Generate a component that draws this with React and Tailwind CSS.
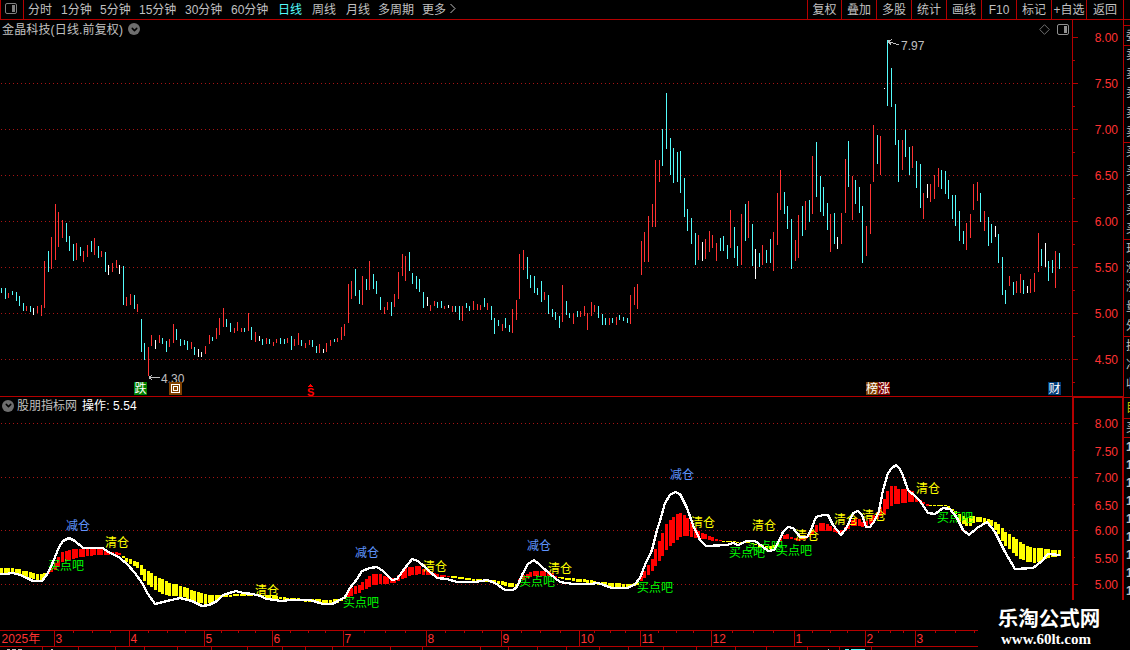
import { ChevronDown } from 'lucide-react';

const RED = '#b40000';
const COLORS = { r: '#ff3232', c: '#54fcfc', w: '#ffffff' };

// x, high, low, color
const candles = `
1 288 293 c|5 288 299 c|8 293 298 r|12 291 295 c|16 292 301 c|19 296 306 c|23 303 311 c|26 306 311 r|30 306 312 c|33 308 315 w
37 306 313 r|41 305 316 r|44 261 308 r|48 251 272 c|51 237 269 r|55 204 260 r|58 212 247 r|62 220 238 r|66 223 242 c|69 236 251 c
73 244 261 c|76 243 260 r|80 247 256 c|83 251 262 r|87 245 257 r|91 241 252 c|94 238 255 r|98 246 258 c|101 251 257 r|105 252 272 c
108 265 275 w|112 263 272 r|116 260 268 r|119 265 274 w|123 266 305 c|126 297 306 r|130 294 305 r|134 295 309 c|137 304 312 r
141 319 352 c|144 343 360 c|148 347 376 r|151 335 346 r|155 340 349 w|159 335 343 r|162 338 344 c|166 341 352 c|169 339 347 r
173 324 343 r|176 329 340 c|180 339 346 c|184 340 345 c|187 341 350 c|191 342 349 r|194 347 355 c|198 349 357 w|201 352 357 w
205 346 354 r|209 335 344 r|212 337 341 c|216 328 339 r|219 318 335 r|223 308 327 r|226 319 327 c|230 323 332 c|234 328 333 r
237 322 331 r|241 328 332 r|244 328 332 c|248 313 331 r|251 327 340 c|255 332 342 r|259 336 341 w|262 339 345 c|266 338 344 r
269 339 344 c|273 342 346 r|276 339 343 r|280 338 344 c|284 339 344 c|287 338 343 r|291 336 350 c|294 339 346 r|298 333 345 r
301 340 346 c|305 343 348 r|309 340 345 r|312 340 347 c|316 346 353 c|319 344 353 r|323 349 353 w|326 343 352 r|330 340 346 r
334 339 342 c|337 338 342 r|341 327 340 r|344 324 336 r|348 284 323 r|351 281 299 r|355 269 296 c|359 290 304 c|362 276 305 r
366 279 290 c|369 261 290 r|373 274 289 c|376 281 294 c|380 297 310 c|384 307 314 r|387 302 310 r|391 302 316 c|394 294 307 r
398 272 299 r|402 254 276 r|405 256 281 r|409 252 271 c|412 273 284 c|416 276 289 c|419 279 292 c|423 292 308 c|427 297 306 w
430 305 311 r|434 301 306 r|437 302 308 c|441 301 308 c|444 306 309 r|448 305 308 w|452 306 312 r|455 306 312 c|459 306 320 c
462 306 321 r|466 303 308 c|469 306 311 c|473 301 310 r|477 304 310 r|480 305 310 r|484 298 307 c|487 303 310 r|491 306 320 c
494 318 334 c|498 320 326 c|502 324 331 r|505 318 328 c|509 325 332 c|512 309 333 r|516 300 320 r|519 254 299 r|523 250 270 r
527 257 279 c|530 275 288 c|534 276 293 c|537 288 295 c|541 281 302 c|544 292 300 r|548 295 314 c|552 309 317 c|555 312 320 c
559 316 328 c|562 285 322 r|566 301 315 c|569 313 318 c|573 313 324 r|577 311 317 c|580 311 317 r|584 306 316 r|587 313 330 r
591 302 316 r|594 305 312 r|598 306 318 c|602 314 325 c|605 318 325 c|609 318 325 r|612 318 323 c|616 317 325 r|619 315 320 c
623 317 321 c|627 318 323 c|630 295 324 r|634 287 305 r|637 284 309 r|641 241 275 r|644 232 262 r|648 216 262 r|652 204 227 r
655 160 227 r|659 160 182 r|662 129 166 c|666 93 149 c|670 138 175 c|673 148 183 c|677 152 182 c|680 151 193 c|684 178 217 c
687 209 231 c|691 218 244 c|695 233 265 c|698 235 260 r|702 242 261 w|705 239 259 r|709 231 252 r|712 235 248 r|716 243 261 r
720 238 251 c|723 236 251 c|727 245 259 c|730 210 248 r|734 227 258 c|737 246 266 c|741 214 265 r|745 204 241 c|748 201 238 r
752 224 266 c|755 249 279 w|759 253 267 c|762 245 265 r|766 250 263 c|770 239 263 c|773 232 271 r|777 193 245 r|780 170 210 r
784 192 214 c|787 206 229 c|791 219 269 c|795 240 261 r|798 215 258 r|802 206 236 c|805 201 230 r|809 200 222 c|812 156 214 r
816 142 197 c|820 176 212 c|823 187 216 c|827 203 230 c|830 214 252 r|834 213 244 c|837 237 249 w|841 213 244 r|845 159 213 r
848 141 187 c|852 176 220 r|855 180 204 c|859 187 213 c|862 206 263 c|866 226 256 r|870 184 234 r|873 125 182 r|877 135 164 c
880 136 175 r|884 88 89 w|887 40 106 c|891 68 107 c|895 104 145 c|898 140 182 c|902 140 170 r|905 130 157 c|909 147 175 c
912 146 168 r|916 161 188 c|920 164 208 c|923 193 219 r|927 184 198 w|930 184 202 r|934 175 199 r|938 168 187 r|941 170 189 c
945 171 194 c|948 180 199 c|952 195 219 c|955 195 226 c|959 211 241 c|963 231 244 c|966 223 250 r|970 214 238 r|973 184 210 r
977 182 201 r|980 193 222 c|984 211 231 r|988 217 246 c|991 224 243 c|995 226 237 w|998 234 263 c|1002 257 295 c|1005 290 304 c
1009 276 286 r|1013 282 295 c|1016 281 293 r|1020 274 293 r|1023 280 294 c|1027 286 293 w|1030 279 293 r|1034 273 292 r
1038 233 272 r|1041 249 266 c|1045 243 267 w|1048 261 281 c|1052 260 273 c|1055 251 288 r|1059 253 269 c`
  .trim()
  .split(/[|\n]/)
  .map((s) => {
    const [x, hi, lo, c] = s.split(' ');
    return { x: +x, hi: +hi, lo: +lo, c };
  });

// band between the two averages: x, top, bottom
const bands = [
  ['y', [[1, 568, 574], [12, 568, 573], [19, 569, 574], [23, 571, 577], [30, 572, 578], [37, 574, 580], [41, 574, 580], [44, 573, 577]]],
  ['r', [[48, 572, 574], [51, 568, 572], [55, 563, 570], [58, 557, 567], [62, 552, 562], [69, 550, 560], [76, 549, 558], [87, 549, 556], [98, 548, 555], [105, 549, 555], [108, 551, 555], [119, 553, 555]]],
  ['y', [[123, 556, 558], [126, 558, 562], [130, 559, 564], [134, 561, 566], [137, 562, 568], [141, 565, 575], [144, 569, 581], [148, 571, 585], [155, 576, 590], [162, 579, 594], [169, 583, 596], [176, 584, 596], [184, 587, 597], [191, 590, 601], [198, 592, 603], [205, 594, 604], [212, 595, 602], [219, 595, 598], [226, 595, 597], [240, 594, 596], [255, 594, 596], [266, 595, 598], [273, 596, 599], [290, 598, 600], [330, 600, 604], [337, 599, 603], [344, 597, 599]]],
  ['r', [[348, 590, 597], [351, 588, 596], [355, 586, 594], [359, 585, 593], [362, 582, 590], [366, 579, 589], [369, 576, 587], [373, 574, 585], [380, 574, 584], [387, 577, 584], [394, 578, 583], [398, 575, 581], [402, 571, 579], [405, 568, 578], [409, 567, 576], [419, 566, 574], [423, 569, 575], [430, 571, 575], [437, 574, 577], [444, 575, 577], [448, 576, 577]]],
  ['y', [[452, 576, 578], [462, 577, 579], [473, 579, 581], [484, 579, 582], [494, 580, 583], [501, 581, 585], [509, 583, 587], [516, 584, 588]]],
  ['r', [[519, 579, 583], [523, 575, 580], [527, 574, 578], [530, 572, 577], [534, 571, 576], [548, 571, 576], [552, 573, 576], [555, 576, 578]]],
  ['y', [[559, 577, 578], [566, 578, 580], [573, 578, 581], [580, 579, 582], [590, 580, 583], [600, 582, 585], [616, 583, 587], [627, 584, 587], [637, 583, 585]]],
  ['r', [[641, 576, 581], [644, 571, 578], [648, 565, 575], [652, 559, 571], [655, 549, 566], [659, 541, 561], [662, 533, 556], [666, 524, 550], [670, 520, 546], [673, 517, 543], [677, 514, 540], [680, 513, 537], [684, 515, 536], [687, 518, 536], [691, 522, 537], [695, 528, 538], [698, 531, 538], [702, 533, 539], [709, 536, 540], [712, 537, 541], [716, 539, 541], [720, 540, 541]]],
  ['y', [[723, 541, 542], [748, 542, 543], [755, 544, 545], [759, 545, 548], [770, 546, 549], [777, 544, 547]]],
  ['r', [[780, 537, 542], [784, 535, 539], [787, 534, 539], [791, 537, 539], [798, 539, 541], [805, 538, 539], [809, 533, 537], [812, 530, 534], [816, 525, 532], [820, 523, 531], [827, 524, 531], [830, 526, 531], [837, 530, 533], [841, 530, 533], [845, 527, 531], [852, 520, 526], [855, 518, 526], [859, 519, 526], [863, 523, 527], [870, 518, 524], [877, 512, 519], [880, 507, 516], [884, 499, 514], [887, 491, 509], [891, 486, 506], [895, 486, 504], [898, 489, 504], [905, 489, 503], [912, 491, 502], [916, 497, 502], [920, 500, 503], [927, 504, 506]]],
  ['y', [[930, 505, 506], [945, 505, 506], [948, 506, 508], [955, 511, 514], [959, 514, 522], [966, 518, 526], [970, 516, 526], [973, 516, 523], [980, 517, 522], [988, 519, 523], [995, 522, 530], [998, 524, 534], [1002, 528, 541], [1005, 532, 546], [1009, 534, 549], [1013, 537, 553], [1016, 539, 556], [1020, 542, 559], [1023, 544, 560], [1027, 546, 562], [1034, 548, 563], [1041, 548, 561], [1048, 549, 558], [1055, 550, 557], [1059, 550, 556]]],
];

const lerp = (pts, x) => {
  const i = pts.findIndex((p) => p[0] >= x);
  if (i <= 0) return pts[0].slice(1);
  const [a, b] = [pts[i - 1], pts[i]];
  const t = (x - a[0]) / (b[0] - a[0]);
  return [Math.round(a[1] + (b[1] - a[1]) * t), Math.round(a[2] + (b[2] - a[2]) * t)];
};

const bandBars = candles.flatMap(({ x }) => {
  const band = bands.find(([, pts]) => x >= pts[0][0] && x <= pts[pts.length - 1][0]);
  if (!band) return [];
  const [top, bottom] = lerp(band[1], x);
  return [{ x, top, bottom, fill: band[0] === 'y' ? '#ffff00' : '#ff0000' }];
});

const signalLine =
  '0,574 5,574 13,573 20,575 27,578 33,581 42,581 48,573 53,562 59,547 63,541 69,538 75,541 83,548 103,548 108,552 115,555 120,558 127,564 135,573 142,583 148,594 155,604 167,601 180,598 192,601 202,606 209,605 217,601 223,595 236,591 243,593 253,594 260,596 267,599 282,601 290,600 310,600 323,604 332,604 338,601 345,597 350,588 357,579 362,571 370,568 377,567 383,571 392,580 397,579 405,568 412,559 418,561 427,569 437,578 447,579 457,582 475,582 487,580 495,583 505,590 513,590 517,587 522,575 528,564 534,560 540,565 550,574 560,582 573,584 590,584 598,583 612,588 628,588 635,584 640,578 645,565 652,550 657,530 660,521 665,503 670,495 675,492 680,494 687,508 693,525 700,540 706,546 727,545 733,543 738,545 747,541 755,541 762,546 768,551 774,550 778,543 783,532 788,527 793,528 800,537 807,537 811,530 816,517 823,515 828,515 833,525 841,535 847,527 853,513 858,511 862,515 866,527 870,527 875,520 879,511 883,490 888,473 892,468 896,465 899,468 902,473 908,490 915,496 920,501 928,513 935,514 943,508 950,509 957,518 963,530 969,535 977,528 987,522 995,532 1005,552 1015,569 1033,568 1042,561 1048,554 1060,555';

const SELL = '#ffff00';
const BUY = '#00ff00';
const TRIM = '#5f95ff';
const notes = [
  [66, 525, '减仓', TRIM], [355, 552, '减仓', TRIM], [527, 545, '减仓', TRIM], [670, 474, '减仓', TRIM],
  [105, 542, '清仓', SELL], [255, 590, '清仓', SELL], [423, 566, '清仓', SELL], [548, 568, '清仓', SELL],
  [691, 522, '清仓', SELL], [752, 525, '清仓', SELL], [795, 535, '清仓', SELL], [834, 519, '清仓', SELL],
  [862, 515, '清仓', SELL], [916, 488, '清仓', SELL],
  [48, 565, '买点吧', BUY], [343, 602, '买点吧', BUY], [519, 581, '买点吧', BUY], [637, 587, '买点吧', BUY],
  [729, 552, '买点吧', BUY], [747, 546, '买点吧', BUY], [776, 550, '买点吧', BUY], [937, 517, '买点吧', BUY],
];

const priceScale = [[37, '8.00'], [83, '7.50'], [129, '7.00'], [175, '6.50'], [221, '6.00'], [267, '5.50'], [313, '5.00'], [359, '4.50']];
const indicatorScale = [[423, '8.00'], [451, '7.50'], [477, '7.00'], [505, '6.50'], [530, '6.00'], [558, '5.50'], [584, '5.00']];
const months = [[54, '3'], [129, '4'], [204, '5'], [272, '6'], [343, '7'], [426, '8'], [501, '9'], [579, '10'], [640, '11'], [711, '12'], [794, '1'], [865, '2'], [915, '3']];
const weekTicks = [73, 92, 110, 148, 167, 185, 221, 238, 255, 290, 308, 325, 364, 385, 405, 445, 464, 482, 521, 540, 560, 594, 610, 625, 658, 676, 693, 732, 753, 773, 812, 830, 847, 878, 890, 903, 935, 955, 974];
const lowerTicks = [42, 78, 115, 144, 177, 211, 247, 282, 305, 332, 390, 422, 480, 508, 537, 566, 599, 628, 663, 696, 735, 766, 807, 839, 871];

function PanelIcon({ className }) {
  return (
    <svg className={className} width="13" height="11" viewBox="0 0 13 11" fill="none">
      <rect x=".5" y=".5" width="11" height="10" rx="1.5" stroke="currentColor" />
      <rect x="7" y="2" width="3" height="7" fill="currentColor" />
    </svg>
  );
}

function RoundToggle() {
  return (
    <span className="flex h-3 w-3 items-center justify-center rounded-full bg-[#6e6e6e]">
      <ChevronDown size={9} strokeWidth={4} className="text-black" />
    </span>
  );
}

function GridLine({ y }) {
  return <line x1="1" x2="1071" y1={y + 0.5} y2={y + 0.5} stroke="#a81414" strokeDasharray="1 3" shapeRendering="auto" />;
}

function Toolbar() {
  return (
    <div className="flex h-5 shrink-0 border-b border-[#b40000] text-[#c0c0c0]">
      <div className="flex w-6 shrink-0 items-start border-x border-[#b40000] pt-[3px] pl-1">
        <PanelIcon className="text-[#808080]" />
      </div>
      <div className="flex flex-1 leading-5 whitespace-nowrap">
        <span className="w-[33px] pl-1">分时</span>
        <span className="w-[39px] pl-1">1分钟</span>
        <span className="w-[39px] pl-1">5分钟</span>
        <span className="w-[46px] pl-1">15分钟</span>
        <span className="w-[46px] pl-1">30分钟</span>
        <span className="w-[47px] pl-1">60分钟</span>
        <span className="w-[34px] pl-1 text-[#54fcfc]">日线</span>
        <span className="w-[34px] pl-1">周线</span>
        <span className="w-8 pl-1">月线</span>
        <span className="w-11 pl-1">多周期</span>
        <span className="pl-1">更多</span>
        <svg className="mt-[3px] ml-[3px]" width="8" height="11" viewBox="0 0 8 11">
          <path d="M1.5 1l4.5 4.5L1.5 10" fill="none" stroke="currentColor" />
        </svg>
      </div>
      <div className="flex h-[19px] leading-5 whitespace-nowrap text-center *:border-l *:border-[#b40000]">
        <span className="w-[34px]">复权</span>
        <span className="w-[35px]">叠加</span>
        <span className="w-[35px]">多股</span>
        <span className="w-[35px]">统计</span>
        <span className="w-[35px]">画线</span>
        <span className="w-[35px]">F10</span>
        <span className="w-[35px]">标记</span>
        <span className="w-[35px]">+自选</span>
        <span className="w-[37px]">返回</span>
        <span className="w-[7px]" />
      </div>
    </div>
  );
}

function PricePanel() {
  return (
    <section className="flex h-[376px] shrink-0">
      <div className="w-[1072px]">
        <header className="flex h-[18px] items-center pr-[2px] pl-[2px] text-[#c0c0c0]">
          <h1 className="w-[126px] pt-px tracking-[0.15px] whitespace-nowrap">金晶科技(日线.前复权)</h1>
          <RoundToggle />
          <svg className="mr-[7px] ml-auto" width="11" height="11" viewBox="0 0 11 11">
            <path d="M5.5.7l4.8 4.8-4.8 4.8L.7 5.5z" fill="none" stroke="#707070" />
          </svg>
          <PanelIcon className="text-[#909090]" />
        </header>
        <svg className="block" width="1072" height="358" viewBox="0 38 1072 358" shapeRendering="crispEdges">
          {priceScale.slice(1).map(([y]) => <GridLine key={y} y={y} />)}
          {candles.map(({ x, hi, lo, c }) => (
            <rect key={x} x={x} y={hi} width="1" height={lo - hi} fill={COLORS[c]} />
          ))}
          {/* high / low callouts */}
          <g stroke="#c0c0c0" fill="none">
            <path d="M888 41.5l11 3.5M888 41l4-1.5M888 41l3 4" />
            <path d="M149 377.5h11M149 377.5l3.5-3M149 377.5l3.5 3" />
          </g>
          <text x="901" y="50" fill="#c0c0c0">7.97</text>
          <text x="161" y="383" fill="#c0c0c0">4.30</text>
          {/* event markers */}
          <rect x="134" y="382" width="13" height="13" fill="#008000" />
          <text x="134.5" y="393" fill="#fff">跌</text>
          <rect x="169" y="382" width="13" height="13" fill="#804000" />
          <path d="M171.5 384.5h8v8h-8zM173.5 386.5h4v4h-4z" fill="none" stroke="#fff" />
          <path d="M308 386.5h5M309 385.5h3M310 384.5h1" stroke="#f00" fill="none" />
          <text x="307" y="395.5" fontSize="11" fontWeight="700" fill="#f00">S</text>
          <rect x="866" y="382" width="12" height="13" fill="#804000" />
          <rect x="878" y="382" width="12" height="13" fill="#800000" />
          <text x="866" y="393" fill="#fff">榜涨</text>
          <rect x="1048" y="382" width="13" height="13" fill="#003c78" />
          <text x="1048.5" y="393" fill="#fff">财</text>
        </svg>
      </div>
      <svg className="block" width="51" height="376" viewBox="1072 20 51 376" shapeRendering="crispEdges">
        <rect x="1072" y="20" width="1" height="376" fill={RED} />
        {priceScale.map(([y, label]) => (
          <g key={label}>
            <rect x="1073" y={y} width="5" height="1" fill={RED} />
            <rect x="1073" y={y + 23} width="2" height="1" fill={RED} />
            <text x="1118" y={y + 5} textAnchor="end" fill="#ff3232">{label}</text>
          </g>
        ))}
      </svg>
    </section>
  );
}

function IndicatorPanel() {
  return (
    <section className="flex h-[234px] shrink-0 border-t border-[#b40000]">
      <div className="w-[1072px]">
        <header className="flex h-[17px] items-center pl-[2px] text-[#c0c0c0]">
          <RoundToggle />
          <h2 className="ml-[3px]">股朋指标网</h2>
          <span className="ml-[5px] tracking-[0.1px] text-white">操作: 5.54</span>
        </header>
        <svg className="block" width="1072" height="216" viewBox="0 414 1072 216" shapeRendering="crispEdges">
          {indicatorScale.filter((_, i) => i % 2 === 0).map(([y]) => <GridLine key={y} y={y} />)}
          {bandBars.map(({ x, top, bottom, fill }) => (
            <rect key={x} x={x - 1} y={top} width="3" height={Math.max(1, bottom - top)} fill={fill} />
          ))}
          {notes.map(([x, y, label, fill]) => (
            <text key={x} x={x} y={y + 4.5} fill={fill}>{label}</text>
          ))}
          <polyline points={signalLine} fill="none" stroke="#fff" strokeWidth="2.3" strokeLinejoin="round" />
        </svg>
      </div>
      <svg className="block" width="51" height="233" viewBox="1072 397 51 233" shapeRendering="crispEdges">
        <path d="M1073 630V397h50" fill="none" stroke={RED} strokeWidth="2" />
        <rect x="1122" y="397" width="1" height="233" fill={RED} />
        {indicatorScale.map(([y, label], i) => (
          <g key={label}>
            <rect x="1073" y={y - (i % 2)} width={i % 2 ? 2 : 5} height="1" fill={RED} />
            <text x="1118" y={y + 5} textAnchor="end" fill="#ff3232">{label}</text>
          </g>
        ))}
      </svg>
    </section>
  );
}

function TimeScale() {
  return (
    <svg className="block" width="1123" height="20" viewBox="0 630 1123 20" shapeRendering="crispEdges">
      <path d="M0 630.5h1123M0 646.5h1123" stroke={RED} />
      {weekTicks.map((x) => <rect key={x} x={x} y="631" width="1" height="2" fill={RED} />)}
      {lowerTicks.map((x) => <rect key={x} x={x} y="647" width="1" height="3" fill={RED} />)}
      <text x="1.5" y="643" fill="#ff3232">2025年</text>
      {months.map(([x, label]) => (
        <g key={x}>
          <rect x={x} y="630" width="1" height="16" fill={RED} />
          <text x={x + 1.5} y="643" fill="#ff3232">{label}</text>
        </g>
      ))}
      <path d="M7 649.5h3M12 649.5h4M18 649.5h4M51 649.5h2M828 649.5h1" stroke="#c0c0c0" />
      <path d="M845 649.5h4M851 649.5h14" stroke="#54fcfc" />
    </svg>
  );
}

// edge of the quote list, cut off by the window
function QuoteStrip() {
  return (
    <aside className="flex w-[7px] shrink-0 flex-col overflow-hidden border-l border-[#b40000] text-[#c0c0c0] *:shrink-0 *:overflow-hidden *:border-b *:border-[#b40000] *:pl-[2px]">
      <div className="h-[6px]" />
      <div className="h-5 leading-5">委</div>
      {['卖卖卖卖卖', '买买买买买', '现涨涨量外'].map((rows) => (
        <div key={rows} className="h-[97px] w-4 leading-[19.2px] break-all">{rows}</div>
      ))}
      <div className="h-[61px] w-4 leading-[19.2px] break-all">换净收</div>
      <div className="h-[21px] leading-5 text-[#c0c000]">目</div>
      <div className="h-[19px] leading-[18px]">买</div>
      <div className="h-[212px] w-[10px] border-b-0! leading-[18px] font-bold break-all">111111111</div>
    </aside>
  );
}

export default function App() {
  return (
    <div className="relative flex h-[650px] w-[1130px] flex-col overflow-hidden bg-black font-['Liberation_Sans','Noto_Sans_CJK_SC',sans-serif] text-[12px]">
      <Toolbar />
      <div className="flex flex-1">
        <main className="flex w-[1123px] flex-col">
          <PricePanel />
          <IndicatorPanel />
          <TimeScale />
        </main>
        <QuoteStrip />
      </div>

      {/* Watermark */}
      <div className="absolute right-0 bottom-0 flex h-[50px] w-[152px] flex-col items-center bg-black pr-[10px] text-white">
        <span className="mt-[6px] text-[20.5px] leading-[26px] font-bold">乐淘公式网</span>
        <span className="mr-1.5 font-['Liberation_Serif',serif] text-[15px] leading-[14px] font-bold">www.60lt.com</span>
      </div>
    </div>
  );
}
